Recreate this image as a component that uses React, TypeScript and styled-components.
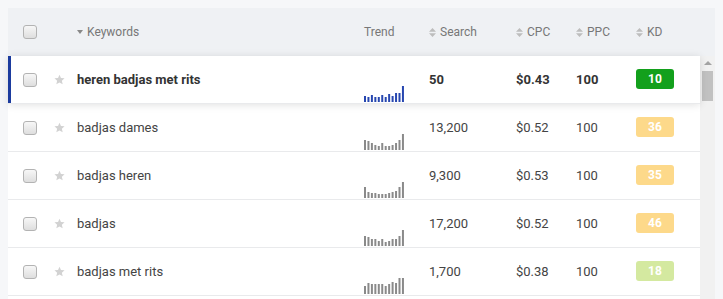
import React from 'react'
import styled, { createGlobalStyle } from 'styled-components'

const GlobalStyle = createGlobalStyle`
  html, body {
    margin: 0;
    padding: 0;
    height: 100%;
    overflow: hidden;
    background: #f6f7f9;
  }
  body {
    padding: 8px;
    font-family: Roboto, "Liberation Sans", Arial, sans-serif;
    box-sizing: border-box;
  }
`

type KdLevel = 'easy' | 'mid' | 'low'

interface Keyword {
  term: string
  trend: number[]
  search: string
  cpc: string
  ppc: string
  kd: number
  level: KdLevel
}

const rows: Keyword[] = [
  { term: 'heren badjas met rits', trend: [6, 5, 7, 5, 5, 7, 5, 8, 6, 9, 9, 16], search: '50', cpc: '$0.43', ppc: '100', kd: 10, level: 'easy' },
  { term: 'badjas dames', trend: [10, 9, 7, 5, 4, 7, 4, 4, 5, 7, 10, 16], search: '13,200', cpc: '$0.52', ppc: '100', kd: 36, level: 'mid' },
  { term: 'badjas heren', trend: [11, 6, 5, 5, 4, 4, 4, 5, 6, 7, 11, 16], search: '9,300', cpc: '$0.53', ppc: '100', kd: 35, level: 'mid' },
  { term: 'badjas', trend: [10, 9, 7, 7, 5, 7, 4, 5, 7, 7, 10, 16], search: '17,200', cpc: '$0.52', ppc: '100', kd: 46, level: 'mid' },
  { term: 'badjas met rits', trend: [8, 11, 10, 10, 10, 10, 8, 10, 12, 11, 16, 16], search: '1,700', cpc: '$0.38', ppc: '100', kd: 18, level: 'low' },
  { term: '', trend: [], search: '', cpc: '', ppc: '', kd: 0, level: 'low' },
]

const kdColors: Record<KdLevel, string> = {
  easy: '#13a01c',
  mid: '#fdd98a',
  low: '#d4e9a0',
}

const COLUMNS = '46px 23px 287px 65px 87px 60px 60px 1fr'

const Table = styled.div`
  width: 707px;
  display: flex;
  flex-direction: column;
`

const Header = styled.div`
  display: grid;
  grid-template-columns: ${COLUMNS};
  align-items: center;
  height: 48px;
  background: #eff1f4;
  color: #777;
  font-size: 12px;
`

const HeadCell = styled.div`
  display: flex;
  align-items: center;
  gap: 4px;
`

const Body = styled.div`
  display: flex;
`

const RowList = styled.div`
  flex: 1;
  display: flex;
  flex-direction: column;
`

const Row = styled.div<{ $active?: boolean }>`
  position: relative;
  display: grid;
  grid-template-columns: ${COLUMNS};
  align-items: center;
  height: 48px;
  box-sizing: border-box;
  background: #fff;
  border-bottom: 1px solid #e9eaec;
  font-size: 13px;
  color: ${p => (p.$active ? '#333' : '#444')};
  font-weight: ${p => (p.$active ? 700 : 400)};
  box-shadow: ${p =>
    p.$active ? 'inset 3px 0 0 #1b3b9e, 0 1px 8px rgba(0, 0, 0, 0.12)' : 'none'};
  z-index: ${p => (p.$active ? 1 : 0)};
`

const CheckCell = styled.div`
  padding-left: 15px;
  display: flex;
  align-items: center;
`

const Checkbox = styled.span`
  width: 12px;
  height: 12px;
  border: 1px solid #b3b3b3;
  border-radius: 3px;
  background: linear-gradient(#f7f7f7, #dedede);
`

const TrendCell = styled.div`
  align-self: end;
  display: flex;
  padding-bottom: 1px;
`

const Badge = styled.span<{ $level: KdLevel }>`
  width: 38px;
  height: 20px;
  border-radius: 3px;
  background: ${p => kdColors[p.$level]};
  color: #fff;
  font-size: 12px;
  font-weight: 700;
  display: flex;
  align-items: center;
  justify-content: center;
  margin-top: -2px;
`

const Scrollbar = styled.div`
  width: 15px;
  background: #f1f1f1;
  display: flex;
  flex-direction: column;
  align-items: center;
`

const ScrollArrow = styled.div`
  margin-top: 5px;
  width: 0;
  height: 0;
  border-left: 4px solid transparent;
  border-right: 4px solid transparent;
  border-bottom: 4px solid #a3a3a3;
`

const ScrollThumb = styled.div`
  margin-top: 6px;
  width: 11px;
  height: 30px;
  background: #c1c1c1;
`

const Star = () => (
  <svg width="11" height="11" viewBox="0 0 24 24">
    <path
      fill="#d2d2d2"
      d="M12 1.5l3.2 7.1 7.8.8-5.8 5.2 1.7 7.7L12 18.3l-6.9 4 1.7-7.7L1 9.4l7.8-.8z"
    />
  </svg>
)

const SortDown = () => (
  <svg width="6" height="4" viewBox="0 0 6 4">
    <path fill="#888" d="M0 0h6L3 4z" />
  </svg>
)

const SortBoth = () => (
  <svg width="7" height="9" viewBox="0 0 7 9">
    <path fill="#bdbdbd" d="M0 3.8L3.5 0 7 3.8zM0 5.2h7L3.5 9z" />
  </svg>
)

const Trend = ({ values, color }: { values: number[]; color: string }) => (
  <svg width="42" height="17" viewBox="0 0 42 17">
    {values.map((h, i) => (
      <rect key={i} x={i * 3.45} y={17 - h} width="2" height={h} fill={color} />
    ))}
  </svg>
)

export default function App() {
  return (
    <>
      <GlobalStyle />
      <Table>
        <Header>
          <CheckCell>
            <Checkbox />
          </CheckCell>
          <div />
          <HeadCell>
            <SortDown />
            Keywords
          </HeadCell>
          <HeadCell>Trend</HeadCell>
          <HeadCell>
            <SortBoth />
            Search
          </HeadCell>
          <HeadCell>
            <SortBoth />
            CPC
          </HeadCell>
          <HeadCell>
            <SortBoth />
            PPC
          </HeadCell>
          <HeadCell>
            <SortBoth />
            KD
          </HeadCell>
        </Header>
        <Body>
          <RowList>
            {rows.map((r, i) =>
              r.term ? (
                <Row key={i} $active={i === 0}>
                  <CheckCell>
                    <Checkbox />
                  </CheckCell>
                  <Star />
                  <div>{r.term}</div>
                  <TrendCell>
                    <Trend values={r.trend} color={i === 0 ? '#2747b0' : '#8a8a8a'} />
                  </TrendCell>
                  <div>{r.search}</div>
                  <div>{r.cpc}</div>
                  <div>{r.ppc}</div>
                  <div>
                    <Badge $level={r.level}>{r.kd}</Badge>
                  </div>
                </Row>
              ) : (
                <Row key={i} />
              )
            )}
          </RowList>
          <Scrollbar>
            <ScrollArrow />
            <ScrollThumb />
          </Scrollbar>
        </Body>
      </Table>
    </>
  )
}
